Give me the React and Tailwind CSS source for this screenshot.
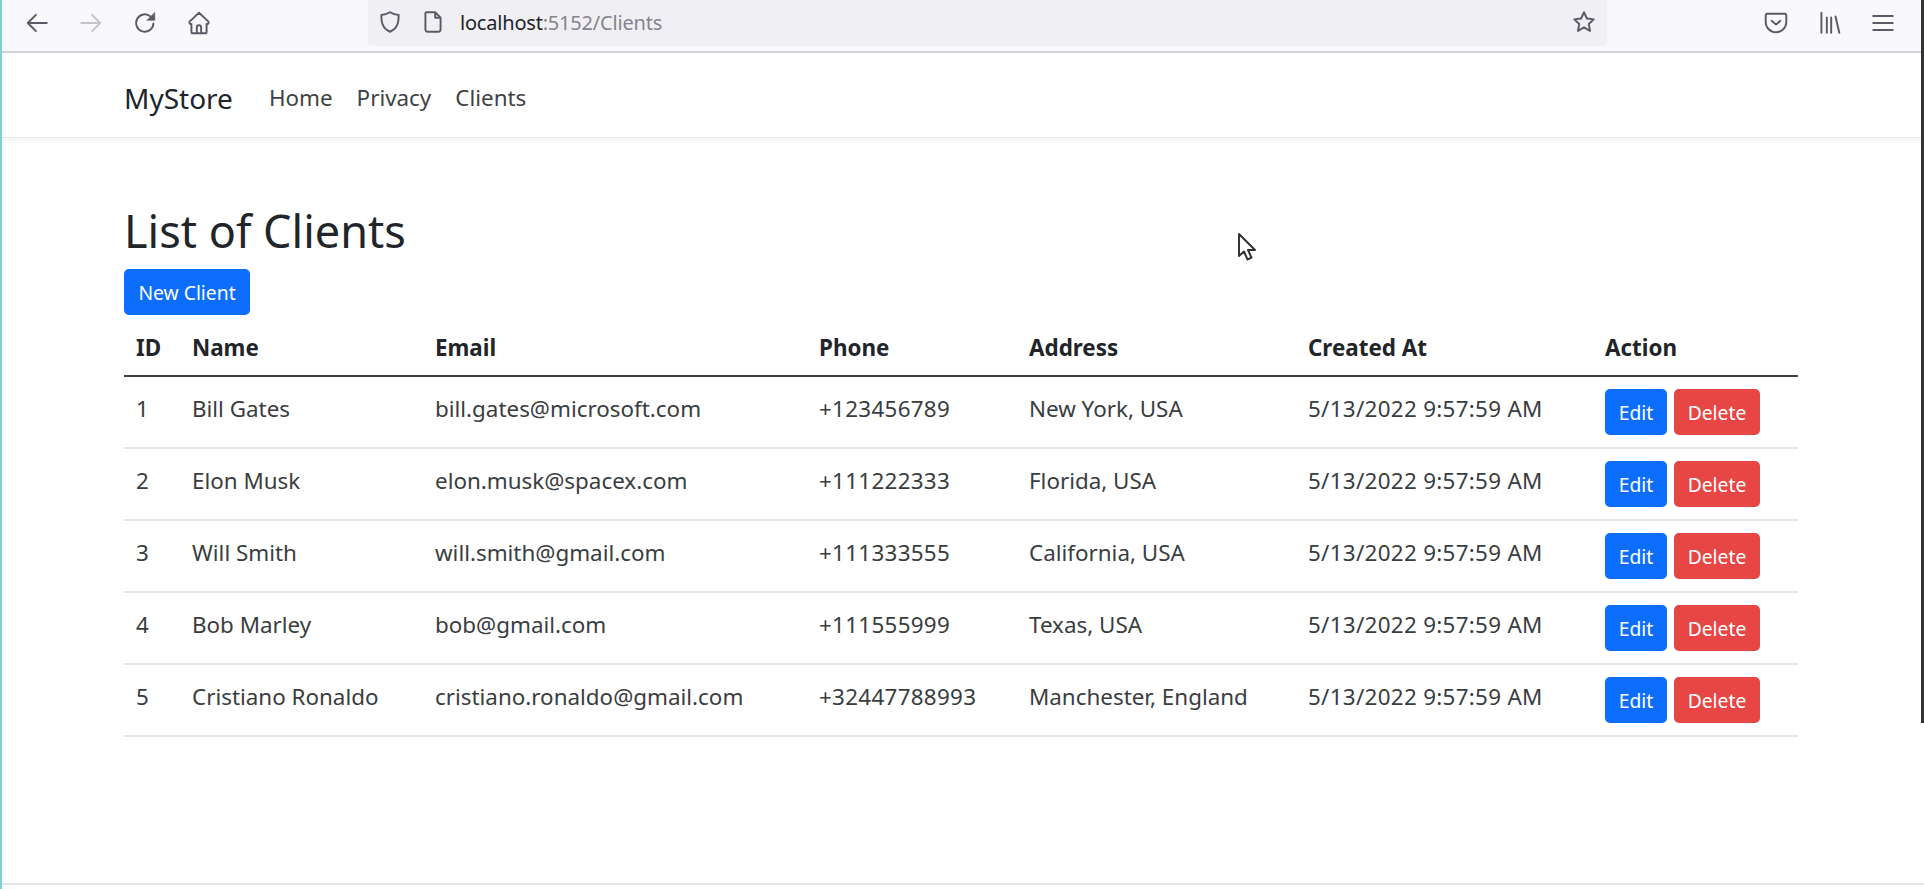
import React from 'react';

const clients = [
  { id: 1, name: 'Bill Gates', email: 'bill.gates@microsoft.com', phone: '+123456789', address: 'New York, USA' },
  { id: 2, name: 'Elon Musk', email: 'elon.musk@spacex.com', phone: '+111222333', address: 'Florida, USA' },
  { id: 3, name: 'Will Smith', email: 'will.smith@gmail.com', phone: '+111333555', address: 'California, USA' },
  { id: 4, name: 'Bob Marley', email: 'bob@gmail.com', phone: '+111555999', address: 'Texas, USA' },
  { id: 5, name: 'Cristiano Ronaldo', email: 'cristiano.ronaldo@gmail.com', phone: '+32447788993', address: 'Manchester, England' },
];

const Icon = ({ children, className = '' }) => (
  <svg className={className} width="26" height="26" viewBox="0 0 24 24" fill="none" stroke="currentColor" strokeWidth="1.8" strokeLinecap="round" strokeLinejoin="round">
    {children}
  </svg>
);

const BrowserBar = () => (
  <div className="h-[53px] bg-[#f9f9fb] border-b-2 border-[#d4d4d8] flex items-start text-[#5b5b66] pl-[22px] pr-[16px]">
    <Icon className="mt-[10px]"><path d="M21 12H3.500M11 4.500 3.500 12l7.500 7.500" /></Icon>
    <Icon className="mt-[10px] ml-[28px] text-[#c4c4ca]"><path d="M3 12h17.500M13 4.500 20.500 12 13 19.500" /></Icon>
    <Icon className="mt-[10px] ml-[28px]">
      <path d="M19.800 12.500a8 8 0 1 1-2.600-6.400" />
      <path d="M21 2.500v7h-7Z" fill="currentColor" strokeWidth="0.6" />
    </Icon>
    <Icon className="mt-[10px] ml-[28px]">
      <path d="M12 2.500 3.500 10.500a1.500 1.500 0 0 0 1 2.500h.5v7a1.500 1.500 0 0 0 1.500 1.500h11a1.500 1.500 0 0 0 1.500-1.500v-7h.5a1.500 1.500 0 0 0 1-2.500L12 2.500Z" />
      <path d="M10 21v-5a2 2 0 0 1 4 0v5" />
    </Icon>
    <div className="ml-[156px] w-[1239px] h-[46px] bg-[#f0f0f4] rounded-b-[4px] flex items-center pl-[9px] pr-[10px] pb-[2px]">
      <Icon><path d="M12 3c3 1.800 5 2.300 8 2.500 0 7-1 12.500-8 15.500C5 18 4 12.500 4 5.500 7 5.300 9 4.800 12 3Z" /></Icon>
      <Icon className="ml-[17px]"><path d="M6 3h8l5 5v11a2 2 0 0 1-2 2H7a2 2 0 0 1-2-2V4a1 1 0 0 1 1-1ZM14 3v5h5" /></Icon>
      <span className="ml-[14px] pt-[2px] text-[20px] font-['Noto_Sans',sans-serif] text-[#1f1f28] tracking-[-0.2px]">
        localhost<span className="text-[#84848c]">:5152/Clients</span>
      </span>
      <Icon className="ml-auto"><path d="m12 3 2.700 5.800 6.300.8-4.600 4.300 1.200 6.300L12 17l-5.600 3.200 1.200-6.300L3 9.600l6.300-.8L12 3Z" /></Icon>
    </div>
    <Icon className="mt-[10px] ml-[156px]"><path d="M4 3.500h16a1.500 1.500 0 0 1 1.500 1.500v6a9.500 9.500 0 0 1-19 0V5A1.500 1.500 0 0 1 4 3.500ZM8 10l4 3.500 4-3.500" /></Icon>
    <Icon className="mt-[10px] ml-[27px]"><path d="M5 2.500v18.500M10 7v14M14 7v14M18 6l3.500 15" /></Icon>
    <Icon className="mt-[10px] ml-[28px]"><path d="M3 5.500h18M3 12h18M3 18.500h18" /></Icon>
  </div>
);

const Navbar = () => (
  <nav className="h-[85px] bg-white border-b border-[#e5e7eb] shadow-[0_3px_8px_rgba(0,0,0,0.05)] flex items-center pt-[5px] pl-[122px]">
    <span className="text-[28px] text-[#212529]">MyStore</span>
    <div className="ml-[36px] flex gap-[24px] text-[22.400px] text-[#3f4245]">
      <span>Home</span>
      <span>Privacy</span>
      <span>Clients</span>
    </div>
  </nav>
);

const Button = ({ children, className }) => (
  <span className={`h-[46px] inline-flex items-center justify-center pt-[2px] rounded-[5px] text-white text-[19.300px] ${className}`}>
    {children}
  </span>
);

const App = () => (
  <div className="h-[889px] overflow-hidden bg-white relative font-['Noto_Sans',sans-serif] text-[#212529] border-l-2 border-[#7fd0d4]">
    <BrowserBar />
    <Navbar />
    <main className="pl-[122px] w-[1798px]">
      <h2 className="mt-[64px] text-[45px] leading-[58px] text-[#212529]">List of Clients</h2>
      <Button className="mt-[9px] w-[126px] bg-[#0d6efd]">New Client</Button>
      <table className="w-[1674px] table-fixed text-[22.400px] mt-[7px]">
        <colgroup>
          <col className="w-[56px]" />
          <col className="w-[243px]" />
          <col className="w-[384px]" />
          <col className="w-[210px]" />
          <col className="w-[279px]" />
          <col className="w-[297px]" />
          <col />
        </colgroup>
        <thead>
          <tr className="h-[54px] border-b-2 border-[#3c3f42] text-left">
            {['ID', 'Name', 'Email', 'Phone', 'Address', 'Created At', 'Action'].map((h) => (
              <th key={h} className="pl-[12px] pb-[2px] font-bold">{h}</th>
            ))}
          </tr>
        </thead>
        <tbody>
          {clients.map((c) => (
            <tr key={c.id} className="h-[72px] border-b-2 border-[#e3e6ea] text-[#3a3d40]">
              <td className="pl-[12px] pb-[6px]">{c.id}</td>
              <td className="pl-[12px] pb-[6px]">{c.name}</td>
              <td className="pl-[12px] pb-[6px]">{c.email}</td>
              <td className="pl-[12px] pb-[6px] tracking-[0.3px]">{c.phone}</td>
              <td className="pl-[12px] pb-[6px]">{c.address}</td>
              <td className="pl-[12px] pb-[6px] tracking-[0.3px]">5/13/2022 9:57:59 AM</td>
              <td className="pl-[12px]">
                <div className="flex gap-[7px]">
                  <Button className="w-[62px] bg-[#0d6efd]">Edit</Button>
                  <Button className="w-[86px] bg-[#e84545]">Delete</Button>
                </div>
              </td>
            </tr>
          ))}
        </tbody>
      </table>
    </main>
    {/* mouse pointer from the recording */}
    <svg className="absolute left-[1235px] top-[232px]" width="22" height="32" viewBox="0 0 22 32" fill="white" stroke="#333" strokeWidth="2" strokeLinejoin="round">
      <path d="M2 2v22l5-4.500 3.500 8 4-1.800-3.500-7.700h7L2 2Z" />
    </svg>
    <div className="absolute left-0 right-0 top-[883px] border-t-2 border-[#e3e6ea]" />
    <div className="absolute right-0 top-0 h-[723px] w-[3px] bg-[#333]" />
  </div>
);

export default App;
